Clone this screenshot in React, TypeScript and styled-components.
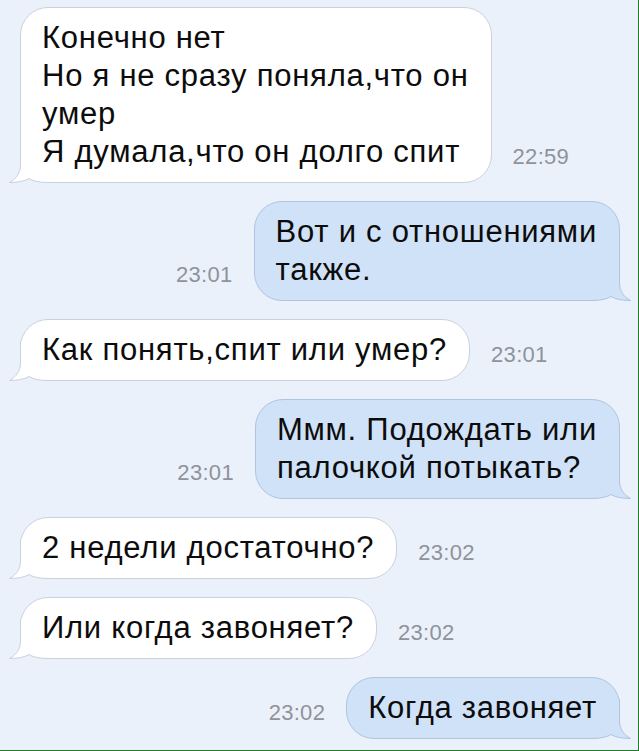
import React from "react";
import styled, { createGlobalStyle } from "styled-components";

const Global = createGlobalStyle`
  html, body { margin: 0; padding: 0; background: #ebf1fa; }
  * { box-sizing: border-box; }
`;

const Screen = styled.div`
  width: 639px;
  height: 751px;
  background: #ebf1fa;
  border-right: 1px solid #1f7a25;
  border-bottom: 1px solid #1f7a25;
  padding: 7px 18px 0 20px;
  display: flex;
  flex-direction: column;
  gap: 18px;
  overflow: hidden;
  font-family: "Liberation Sans", Arial, sans-serif;
`;

const Row = styled.div<{ $out?: boolean }>`
  display: flex;
  flex-direction: ${(p) => (p.$out ? "row-reverse" : "row")};
  align-items: flex-end;
  gap: 21px;
`;

const Bubble = styled.div<{ $out?: boolean }>`
  position: relative;
  background: ${(p) => (p.$out ? "#d0e2f8" : "#ffffff")};
  border: 1px solid ${(p) => (p.$out ? "#afc4de" : "#c9d1dc")};
  border-radius: 28px;
  padding: 11px 22px 11px 21px;
  font-size: 31px;
  letter-spacing: 0.75px;
  line-height: 38px;
  color: #0c0c0c;
  white-space: nowrap;
`;

const Text = styled.span`
  position: relative;
  display: block;
`;

const TailSvg = styled.svg<{ $out?: boolean }>`
  position: absolute;
  bottom: -1px;
  ${(p) => (p.$out ? "right: -12px; transform: scaleX(-1);" : "left: -12px;")}
  width: 42px;
  height: 40px;
  overflow: visible;
`;

const Time = styled.div`
  font-size: 22px;
  letter-spacing: 0.3px;
  line-height: 26px;
  color: #8e939b;
  margin-bottom: 13px;
  white-space: nowrap;
`;

function Tail({ out }: { out?: boolean }) {
  const fill = out ? "#d0e2f8" : "#ffffff";
  const stroke = out ? "#afc4de" : "#c9d1dc";
  return (
    <TailSvg $out={out} viewBox="0 0 42 40">
      <path
        d="M11.5 0 L11.5 22 C11.5 30 7 36 0.5 39.5 C8 39.5 15 38.5 20 35.5 C25 38.5 31 39.5 41 39.5 L41 0 Z"
        fill={fill}
      />
      <path
        d="M11.5 0 L11.5 22 C11.5 30 7 36 0.5 39.5 C8 39.5 15 38.5 20 35.5 C25 38.5 31 39.5 41 39.5"
        fill="none"
        stroke={stroke}
        strokeWidth="1"
      />
    </TailSvg>
  );
}

type Msg = { out?: boolean; lines: string[]; time: string };

const messages: Msg[] = [
  {
    lines: ["Конечно нет", "Но я не сразу поняла,что он", "умер", "Я думала,что он долго спит"],
    time: "22:59",
  },
  { out: true, lines: ["Вот и с отношениями", "также."], time: "23:01" },
  { lines: ["Как понять,спит или умер?"], time: "23:01" },
  { out: true, lines: ["Ммм. Подождать или", "палочкой потыкать?"], time: "23:01" },
  { lines: ["2 недели достаточно?"], time: "23:02" },
  { lines: ["Или когда завоняет?"], time: "23:02" },
  { out: true, lines: ["Когда завоняет"], time: "23:02" },
];

export default function App() {
  return (
    <>
      <Global />
      <Screen>
        {messages.map((m, i) => (
          <Row key={i} $out={m.out}>
            <Bubble $out={m.out}>
              <Tail out={m.out} />
              <Text>
                {m.lines.map((l, j) => (
                  <React.Fragment key={j}>
                    {j > 0 && <br />}
                    {l}
                  </React.Fragment>
                ))}
              </Text>
            </Bubble>
            <Time>{m.time}</Time>
          </Row>
        ))}
      </Screen>
    </>
  );
}
